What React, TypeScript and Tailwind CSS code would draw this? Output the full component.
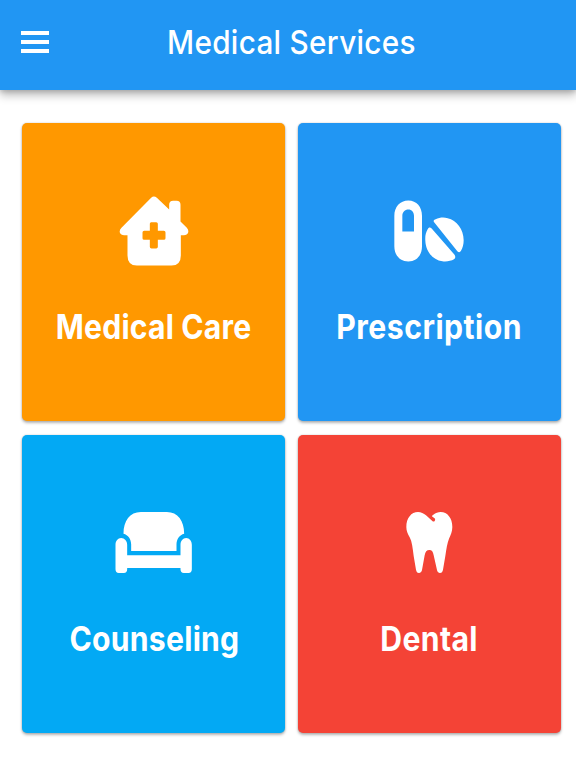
import React from 'react';

interface ServiceCardProps {
  title: string;
  color: string;
  labelClassName: string;
  viewBox: string;
  children: React.ReactNode;
}

const ServiceCard: React.FC<ServiceCardProps> = ({ title, color, labelClassName, viewBox, children }) => {
  return (
    <button
      className={`flex flex-col items-center justify-start rounded-[5px] pt-[71.5px] text-white shadow-[0_2px_3px_rgba(0,0,0,0.28),0_0_2px_rgba(0,0,0,0.2)] ${color}`}
    >
      <svg className="h-[72px] w-20 shrink-0" viewBox={viewBox} fill="currentColor" aria-hidden="true">
        {children}
      </svg>
      <span className={`scale-x-[0.9] whitespace-nowrap pl-px text-[33.5px] leading-10 font-[680] ${labelClassName}`}>
        {title}
      </span>
    </button>
  );
};

const App: React.FC = () => {
  return (
    <div className="flex h-[768px] w-[576px] flex-col overflow-hidden bg-white font-['Inter',sans-serif]">
      <header className="relative flex h-[90px] shrink-0 items-center bg-[#2196f3] pl-[21px] text-white shadow-[0_5px_9px_rgba(0,0,0,0.28),0_2px_4px_rgba(0,0,0,0.12)]">
        <button className="mt-[-6px] flex w-7 flex-col gap-[5px]" aria-label="Open menu">
          <span className="h-1 w-full bg-white" />
          <span className="h-1 w-full bg-white" />
          <span className="h-1 w-full bg-white" />
        </button>
        <h1 className="mt-[-6px] ml-[118px] origin-left scale-x-[0.9] whitespace-nowrap text-[33px] leading-10 font-[450] tracking-[0.35px]">
          Medical Services
        </h1>
      </header>

      <main className="grid grid-cols-[263px_263px] grid-rows-[297.5px_298px] gap-x-[12.5px] gap-y-[14px] pt-[33px] pl-[22px]">
        <ServiceCard title="Medical Care" color="bg-[#ff9800]" labelClassName="mt-10 tracking-[0.2px]" viewBox="40.5 43.5 240 216">
          <path
            fillRule="evenodd"
            d="M152 52Q160 44 169 52L206 87V73Q206 61 218 61H228Q240 61 240 73V123L259 142Q265 149 263 156Q260 164 250 164H241V225Q241 255 213 255H109Q81 255 81 225V164H71Q61 164 58 156Q56 149 63 142ZM152 125Q148 125 148 130V151H131Q126 151 126 156V173Q126 178 131 178H148V199Q148 204 153 204H167Q172 204 172 199V178H190Q195 178 195 173V156Q195 151 190 151H172V130Q172 125 167 125Z"
          />
        </ServiceCard>

        <ServiceCard title="Prescription" color="bg-[#2196f3]" labelClassName="mt-10 tracking-[0.55px]" viewBox="27 43.5 240 216">
          <path
            fillRule="evenodd"
            d="M43 106C43 79 60 60 85 60S126 79 126 106V197C126 224 110 243 85 243S43 224 43 197ZM67 153H102V106C102 95 95 87 85 87S67 95 67 106Z"
          />
          <path d="M163 126C159 121 161 118 167 116C178 111 191 110 203 113C230 119 251 146 251 179C251 191 248 202 243 211C240 216 236 216 232 212Z" />
          <path d="M155 144C150 139 146 140 143 146C137 156 135 167 136 181C137 212 158 239 187 242C200 244 213 241 222 236C227 233 227 228 223 222Z" />
        </ServiceCard>

        <ServiceCard title="Counseling" color="bg-[#03a9f4]" labelClassName="mt-[41px] tracking-[0.3px]" viewBox="40.5 34 240 216">
          <path d="M69 117C69 79 88 52 121 52H199C232 52 251 79 251 117C237 121 228 133 228 149V169H92V149C92 133 83 121 69 117Z" />
          <path d="M45 150C45 139 52 130 62 130S80 139 80 150V182H240V150C240 139 247 130 257 130S274 139 274 150V224Q274 235 264 235H250Q240 235 240 224V220H80V224Q80 235 70 235H55Q45 235 45 224Z" />
        </ServiceCard>

        <ServiceCard title="Dental" color="bg-[#f44336]" labelClassName="mt-[41px] tracking-[0.4px]" viewBox="27 34 240 216">
          <path d="M79 97C79 70 94 52 114 52C123 52 131 56 138 62L157 79C160 82 164 81 165 77C167 73 164 70 158 67C155 65 156 62 160 60C167 55 174 52 182 52C202 52 217 70 217 97C217 111 212 121 207 132C202 144 199 163 196 184L189 225C188 231 185 235 180 235C175 235 172 231 171 226L161 182C159 171 156 166 148 166C140 166 136 171 134 182L126 226C125 231 122 235 117 235C112 235 109 231 108 225L101 184C98 160 96 141 89 128C83 117 79 109 79 97Z" />
        </ServiceCard>
      </main>
    </div>
  );
};

export default App;
